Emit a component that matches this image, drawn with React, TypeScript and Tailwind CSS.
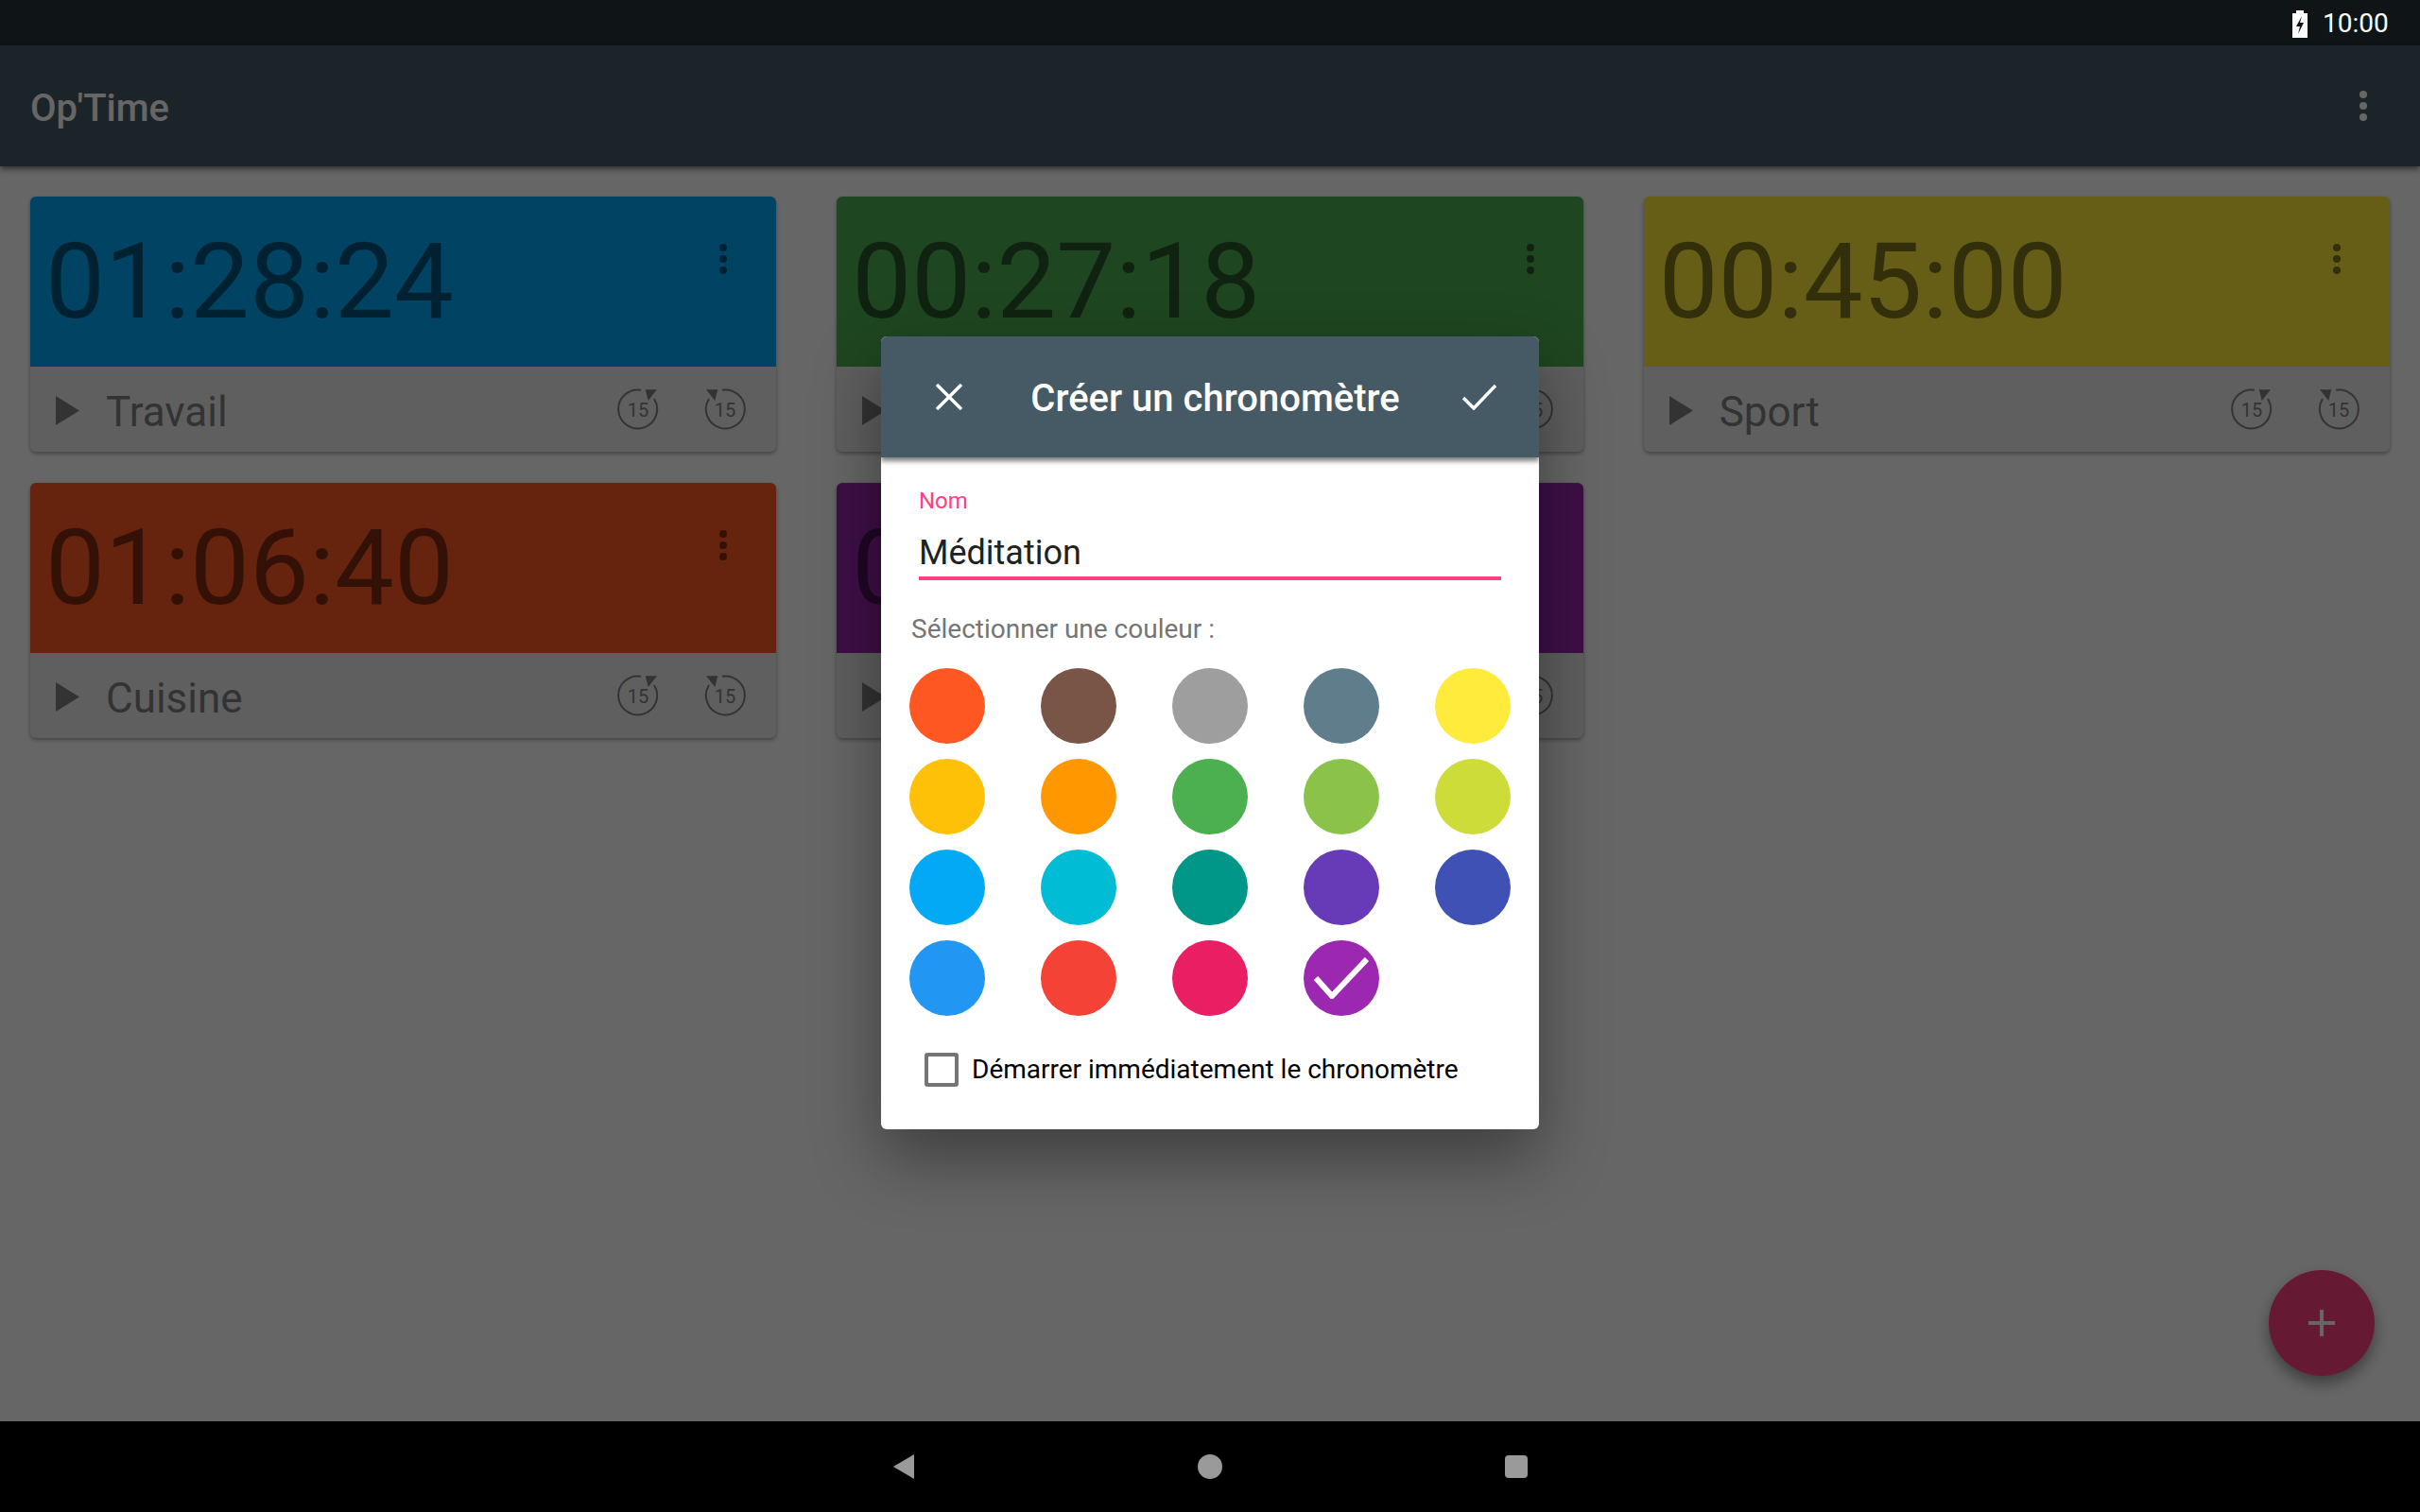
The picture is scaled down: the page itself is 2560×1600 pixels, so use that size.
const Replay15 = ({ forward = false }: { forward?: boolean }) => (
  <svg viewBox="0 0 44 44" className="w-11 h-11 text-[#808080]">
    <g transform={forward ? "matrix(-1 0 0 1 44 0)" : undefined}>
      <path d="M25 1.7 A20.5 20.5 0 1 0 39 11" fill="none" stroke="currentColor" strokeWidth="2" />
      <path d="M29.7 1.3 L42 1.3 L32.7 13 Z" fill="currentColor" />
    </g>
    <text
      x="22"
      y="30"
      textAnchor="middle"
      fontSize="20"
      fontFamily="Roboto, sans-serif"
      fill="currentColor"
    >
      15
    </text>
  </svg>
);

const Dots = ({ className }: { className: string }) => (
  <div className="flex flex-col gap-1">
    <span className={`w-2 h-2 rounded-full ${className}`} />
    <span className={`w-2 h-2 rounded-full ${className}`} />
    <span className={`w-2 h-2 rounded-full ${className}`} />
  </div>
);

const TimerCard = ({ time, name, color }: { time: string; name?: string; color: string }) => (
  <div className="h-[270px] rounded-md overflow-hidden bg-[#eeeeee] shadow-[0_2px_4px_rgba(0,0,0,0.35)] flex flex-col">
    <div className={`h-[180px] relative ${color}`}>
      <p className="pl-4 pt-6 text-[112px] leading-[132px] text-black/50">{time}</p>
      <div className="absolute right-[52px] top-[50px]">
        <Dots className="bg-black/50" />
      </div>
    </div>
    <div className="flex-1 flex items-center pl-[27px] pr-[32px]">
      <svg viewBox="0 0 25 31" className="w-[25px] h-[31px] mt-[2px] text-[#808080]">
        <path d="M0 0 L25 15.5 L0 31 Z" fill="currentColor" />
      </svg>
      <span className="ml-7 mt-[5px] text-[44px] text-[#808080] flex-1">{name}</span>
      <div className="flex gap-12">
        <Replay15 />
        <Replay15 forward />
      </div>
    </div>
  </div>
);

const swatches = [
  "bg-[#ff5722]",
  "bg-[#795548]",
  "bg-[#9e9e9e]",
  "bg-[#607d8b]",
  "bg-[#ffeb3b]",
  "bg-[#ffc107]",
  "bg-[#ff9800]",
  "bg-[#4caf50]",
  "bg-[#8bc34a]",
  "bg-[#cddc39]",
  "bg-[#03a9f4]",
  "bg-[#00bcd4]",
  "bg-[#009688]",
  "bg-[#673ab7]",
  "bg-[#3f51b5]",
  "bg-[#2196f3]",
  "bg-[#f44336]",
  "bg-[#e91e63]",
  "bg-[#9c27b0]",
];

const App = () => {
  return (
    <div className="w-[2560px] h-[1600px] relative overflow-hidden flex flex-col bg-white font-['Roboto',sans-serif]">
      <div className="h-12 bg-[#263238] shrink-0" />
      <header className="h-32 bg-[#455a64] shrink-0 relative shadow-[0_3px_6px_rgba(0,0,0,0.5)] flex items-center justify-between pl-8 pr-14">
        <span className="mt-[5px] text-[40px] font-medium text-white">Op'Time</span>
        <Dots className="bg-white" />
      </header>

      <main className="flex-1 p-8 grid grid-cols-3 gap-x-16 gap-y-[33px] content-start">
        <TimerCard time="01:28:24" name="Travail" color="bg-[#03a9f4]" />
        <TimerCard time="00:27:18" color="bg-[#4caf50]" />
        <TimerCard time="00:45:00" name="Sport" color="bg-[#ffeb3b]" />
        <TimerCard time="01:06:40" name="Cuisine" color="bg-[#ff5722]" />
        {/* the dialog hides all of this card's text but the first digit */}
        <TimerCard time="0" color="bg-[#9c27b0]" />
      </main>

      <div className="h-24 bg-black shrink-0 relative z-20 flex items-center justify-center">
        <svg viewBox="0 0 22 26" className="absolute left-[945px] top-[35px] w-[22px] h-[26px]">
          <path d="M22 0 L22 26 L0 13 Z" fill="#9a9a9a" />
        </svg>
        <span className="w-[26px] h-[26px] rounded-full bg-[#9a9a9a]" />
        <span className="absolute left-[1592px] top-9 w-6 h-6 rounded-sm bg-[#9a9a9a]" />
      </div>

      <button className="absolute left-[2400px] top-[1344px] w-28 h-28 rounded-full bg-[#ff4081] shadow-[0_8px_16px_rgba(0,0,0,0.4)] flex items-center justify-center">
        <svg viewBox="0 0 28 28" className="w-7 h-7">
          <path d="M12 0h4v12h12v4H16v12h-4V16H0v-4h12z" fill="#ffffff" />
        </svg>
      </button>

      <div className="absolute inset-x-0 top-0 bottom-24 bg-black/60 pt-12 pb-px flex items-center justify-center z-10">
        <div className="w-[696px] h-[839px] bg-white rounded-md overflow-hidden shadow-[0_30px_70px_rgba(0,0,0,0.4)]">
          <div className="h-32 bg-[#455a64] flex items-center justify-between pl-[58px] pr-[45px] shadow-[0_4px_5px_rgba(0,0,0,0.5)] relative">
            <svg viewBox="0 0 28 28" className="w-7 h-7">
              <path d="M1 1 L27 27 M27 1 L1 27" stroke="#ffffff" strokeWidth="3.5" fill="none" />
            </svg>
            <span className="ml-[6px] mt-[3px] text-[40px] font-medium text-white">Créer un chronomètre</span>
            <svg viewBox="0 0 36 28" className="w-9 h-7">
              <path d="M1 15 L12 26 L35 2" stroke="#ffffff" strokeWidth="3.5" fill="none" />
            </svg>
          </div>

          <div className="pt-[32px]">
            <div className="mx-10 border-b-4 border-[#ff4081] h-[98px]">
              <p className="text-2xl leading-7 text-[#ff4081]">Nom</p>
              <p className="text-[36px] leading-[44px] mt-[19px] text-[#212121]">Méditation</p>
            </div>
            <p className="ml-8 mt-[36px] text-[28px] leading-8 text-[#757575]">Sélectionner une couleur :</p>

            <div className="mt-[25px] pr-px grid grid-cols-5 gap-y-4">
              {swatches.map((swatch, i) => (
                <div key={swatch} className="flex justify-center">
                  <div className={`w-20 h-20 rounded-full flex items-center justify-center ${swatch}`}>
                    {i === 18 && (
                      <svg viewBox="0 0 58 44" className="w-[58px] h-11">
                        <path d="M2 22 L19 41 L56 2" stroke="#ffffff" strokeWidth="6" fill="none" />
                      </svg>
                    )}
                  </div>
                </div>
              ))}
            </div>

            <div className="mt-[39px] ml-[46px] flex items-center">
              <span className="w-9 h-9 rounded-[3px] border-4 border-[#757575]" />
              <span className="ml-[14px] text-[28px] leading-8 text-black">Démarrer immédiatement le chronomètre</span>
            </div>
          </div>
        </div>
      </div>

      <div className="absolute left-[2425px] top-[9px] z-20 flex items-center gap-[16px]">
        <svg viewBox="0 0 16 29" className="w-4 h-[29px]">
          <path d="M4 0 H12 V3 H16 V29 H0 V3 H4 Z" fill="#ffffff" />
          <path d="M10 6 L4 17 H8 L6 25 L12 13 H8 Z" fill="#0f1416" />
        </svg>
        <span className="text-[28px] leading-8 text-white">10:00</span>
      </div>
    </div>
  );
};

export default App;
